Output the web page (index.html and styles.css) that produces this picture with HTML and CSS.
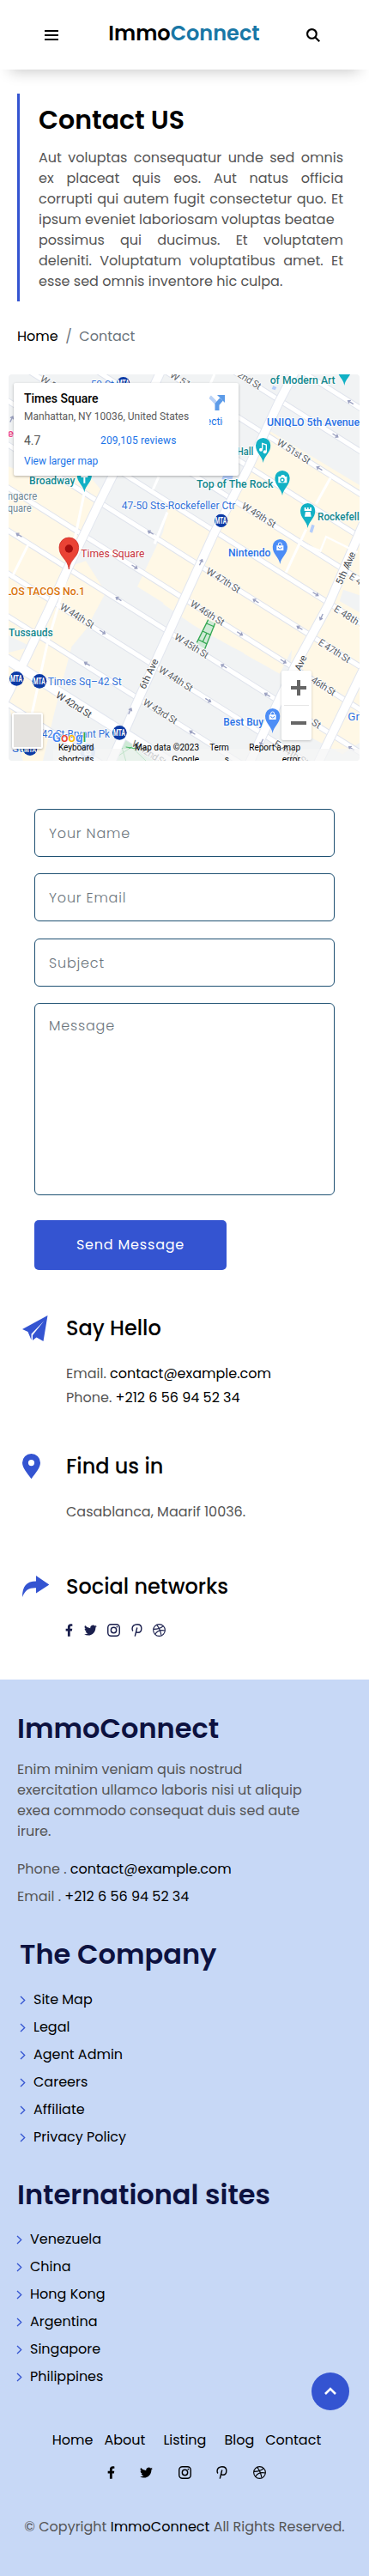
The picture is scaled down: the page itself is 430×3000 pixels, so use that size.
FILE: index.html
```html
<!DOCTYPE html>
<html lang="en">
<head>
<meta charset="utf-8">
<meta name="viewport" content="width=device-width, initial-scale=1">
<title>ImmoConnect - Contact</title>
<link rel="stylesheet" href="styles.css">
</head>
<body>
<svg class="sprite" aria-hidden="true">
  <symbol id="facebook" viewBox="0 0 320 512"><path d="M279 288l14-93h-89v-60c0-25 12-50 52-50h41V7s-37-7-72-7c-73 0-121 44-121 125v70H23v93h81v224h100V288z"/></symbol>
  <symbol id="twitter" viewBox="0 0 16 14"><path d="M5 13.5c6 0 9.300-5 9.300-9.300v-.4c.7-.5 1.200-1 1.700-1.700-.6.3-1.200.4-1.900.5.7-.4 1.200-1 1.400-1.800-.6.4-1.300.6-2.100.8A3.300 3.300 0 0 0 7.800 4.600 9.300 9.300 0 0 1 1.100 1.200a3.300 3.300 0 0 0 1 4.400c-.5 0-1-.1-1.500-.4 0 1.600 1.100 2.900 2.600 3.300-.5.1-1 .1-1.500 0 .4 1.300 1.700 2.300 3.100 2.300A6.600 6.600 0 0 1 0 12.100c1.500.9 3.200 1.400 5 1.400"/></symbol>
  <symbol id="instagram" viewBox="0 0 16 16"><rect x=".8" y=".8" width="14.400" height="14.400" rx="4" fill="none" stroke="currentColor" stroke-width="1.500"/><circle cx="8" cy="8" r="3.400" fill="none" stroke="currentColor" stroke-width="1.500"/><circle cx="12.200" cy="3.800" r="1"/></symbol>
  <symbol id="pinterest" viewBox="0 0 13 16"><path d="M1.600 9C.9 8.200.7 7.200.7 6.100.7 3 3.200.8 6.800.8c3.300 0 5.400 2 5.400 4.800 0 3.200-1.700 5.400-4.200 5.400-1.200 0-2-.6-2.300-1.500M6.800 4.800 4.100 15.600" fill="none" stroke="currentColor" stroke-width="1.500"/></symbol>
  <symbol id="dribbble" viewBox="0 0 16 16"><g fill="none" stroke="currentColor" stroke-width="1.200"><circle cx="8" cy="8" r="7.300"/><path d="M5 1.400c3 3.600 4.800 8 5.600 13M1 6.800c5 0 9-1 12-4M2.800 13c2.600-4.200 6.800-5.700 12.400-4.500"/></g></symbol>
  <symbol id="chevron" viewBox="0 0 7 11"><path d="M1 1l4.700 4.500L1 10" fill="none" stroke="#3454d1" stroke-width="1.300"/></symbol>
  <symbol id="shop" viewBox="0 0 54 90"><path d="M27 88C23 62 1 54 1 27a26 26 0 0 1 52 0c0 27-22 35-26 61z" fill="#4c8df6"/><path d="M15 23h24v17H15z" fill="#fff"/><path d="M21 23v-4a6 6 0 0 1 12 0v4" fill="none" stroke="#fff" stroke-width="3"/><path d="M21 28a6 6 0 0 0 12 0" fill="none" stroke="#4c8df6" stroke-width="3"/></symbol>
  <symbol id="place" viewBox="0 0 54 90"><path d="M27 88C23 62 1 54 1 27a26 26 0 0 1 52 0c0 27-22 35-26 61z" fill="#12b1c5"/></symbol>
</svg>

<header class="header">
  <svg class="menu" viewBox="0 0 16 12"><path d="M0 1h16M0 6h16M0 11h16"/></svg>
  <div class="logo">Immo<span class="logo-accent">Connect</span></div>
  <svg class="search" viewBox="0 0 15 15"><circle cx="6" cy="6" r="5"/><path d="M9.500 9.500l4.800 4.800"/></svg>
</header>

<section class="intro">
  <h1 class="intro-title">Contact US</h1>
  <p class="intro-text">
    <span class="line">Aut voluptas consequatur unde sed omnis</span>
    <span class="line">ex placeat quis eos. Aut natus officia</span>
    <span class="line">corrupti qui autem fugit consectetur quo. Et</span>
    <span class="line line-start">ipsum eveniet laboriosam voluptas beatae</span>
    <span class="line">possimus qui ducimus. Et voluptatem</span>
    <span class="line">deleniti. Voluptatum voluptatibus amet. Et</span>
    <span class="line line-start">esse sed omnis inventore hic culpa.</span>
  </p>
</section>

<nav class="breadcrumb"><a class="link">Home</a><span class="slash">/</span><span>Contact</span></nav>

<section class="map">
  <svg class="map-canvas" viewBox="30 48 1227 1350">
    <rect x="30" y="48" width="1227" height="1350" fill="#f1f3f4"/>
    <g fill="#fff8e6">
      <path d="M30 370L110 405 250 410 320 500 240 720 300 700 370 810 300 940 250 1000 190 1230 150 1398H80L30 1200z"/>
      <path d="M250 400h60l50 60-60 130-60-20z"/>
      <path d="M570 850l90-190 80-60 120-240 65-125 332 200v900l-60 40-150-80 10-260-60 70-320-180z"/>
      <path d="M590 500l270 160 397 190v250L900 1050 480 790 570 600z"/>
      <path d="M1110 960l147 90v190l-170-80z"/>
    </g>
    <path d="M600 890l150 80 100 50 30 50 40 10 40 50 60-120-10 150-80 120-330-200z" fill="#f1f3f4"/>
    <path d="M1200 800l57 20v60l-70-40zM30 960l80 40-80 20z" fill="#f1f3f4"/>
    <path d="M400 1335l80-20 90 83H400z" fill="#ceead6"/>
    <path d="M420 1330l20 68M400 1390l60-40 50 48M440 1350l70 10" stroke="#4bb868" stroke-width="3" fill="none"/>
    <g fill="#b4cdfb"><path d="M780 402h35l-5 20-35-8zM1090 572l10 4-8 26-10-4zM955 88l12 5-5 10-12-4z"/></g>
    <g class="road-edge">
      <path d="M0-627L1300 192M0-477L1300 342M0-327L1300 492M0-177L1300 642M0-27L1300 792M0 123L1300 942M0 276L1300 1095M0 426L1300 1245M0 576L1300 1395M0 726L1300 1545M0 876L1300 1695M0 1183L600 1561"/>
    </g>
    <g class="road">
      <path d="M0-627L1300 192M0-477L1300 342M0-327L1300 492M0-177L1300 642M0-27L1300 792M0 123L1300 942M0 276L1300 1095M0 426L1300 1245M0 576L1300 1395M0 726L1300 1545M0 876L1300 1695M0 1183L600 1561"/>
    </g>
    <g fill="none" stroke="#e2e6ef">
      <path d="M-10 1240L90 1040 180 850 240 720 345 500 400 390 570 20M385 1410L490 1170 645 830 750 600 870 370 975 145 1040 20M870 1410L1030 1070 1150 850 1270 570M1110 1410L1270 1080" stroke-width="34"/>
      <path d="M0 1028L600 1406" stroke-width="38"/>
    </g>
    <g fill="none" stroke="#fff">
      <path d="M-10 1240L90 1040 180 850 240 720 345 500 400 390 570 20M385 1410L490 1170 645 830 750 600 870 370 975 145 1040 20M870 1410L1030 1070 1150 850 1270 570M1110 1410L1270 1080" stroke-width="28"/>
      <path d="M0 1028L600 1406" stroke-width="32"/>
      <path d="M295 460L262 620 242 725 165 990 110 1240M585 530L540 640M100 640L40 760M1155 410L1105 500M1070 590L1000 740M555 405L535 450M750 48l-40 90" stroke-width="9"/>
      <path d="M1060 640l60 25 20-50 110 55" stroke-width="7"/>
    </g>
    <path d="M728 905l24 12-36 90-28-18z" fill="#ceead6"/>
    <path d="M728 905l-40 80M752 917l-36 90M722 918l28 12M708 945l30 14M694 975l28 14M723 952l-15 32" stroke="#34a853" stroke-width="4" fill="none"/>
    <g class="arrows">
      <path d="M-11 0H11M-3-6L-11 0-3 6" transform="translate(67 610) rotate(32)"/>
      <path d="M-11 0H11M-3-6L-11 0-3 6" transform="translate(527 601) rotate(32)"/>
      <path d="M-11 0H11M-3-6L-11 0-3 6" transform="translate(1117 377) rotate(32)"/>
      <path d="M-11 0H11M-3-6L-11 0-3 6" transform="translate(1226 146) rotate(32)"/>
      <path d="M-11 0H11M3-6L11 0 3 6" transform="translate(1172 261) rotate(32)"/>
      <path d="M-11 0H11M3-6L11 0 3 6" transform="translate(470 720) rotate(32)"/>
      <path d="M-11 0H11M-3-6L-11 0-3 6" transform="translate(415 833) rotate(32)"/>
      <path d="M-11 0H11M-3-6L-11 0-3 6" transform="translate(895 840) rotate(32)"/>
      <path d="M-11 0H11M3-6L11 0 3 6" transform="translate(1103 815) rotate(32)"/>
      <path d="M-11 0H11M-3-6L-11 0-3 6" transform="translate(1048 934) rotate(32)"/>
      <path d="M-11 0H11M3-6L11 0 3 6" transform="translate(838 953) rotate(32)"/>
      <path d="M-11 0H11M3-6L11 0 3 6" transform="translate(990 1050) rotate(32)"/>
      <path d="M-11 0H11M3-6L11 0 3 6" transform="translate(358 948) rotate(32)"/>
      <path d="M-11 0H11M-3-6L-11 0-3 6" transform="translate(305 1060) rotate(32)"/>
      <path d="M-11 0H11M-3-6L-11 0-3 6" transform="translate(783 1068) rotate(32)"/>
      <path d="M-11 0H11M-3-6L-11 0-3 6" transform="translate(935 1168) rotate(32)"/>
      <path d="M-11 0H11M3-6L11 0 3 6" transform="translate(727 1186) rotate(32)"/>
      <path d="M-11 0H11M-3-6L-11 0-3 6" transform="translate(673 1300) rotate(32)"/>
      <path d="M-11 0H11M-3-6L-11 0-3 6" transform="translate(1229 1355) rotate(32)"/>
      <path d="M-11 0H11M3-6L11 0 3 6" transform="translate(702 705) rotate(-65)"/>
      <path d="M-11 0H11M3-6L11 0 3 6" transform="translate(454 1225) rotate(-65)"/>
      <path d="M-11 0H11M-3-6L-11 0-3 6" transform="translate(1124 895) rotate(-65)"/>
      <path d="M-11 0H11M-3-6L-11 0-3 6" transform="translate(915 1332) rotate(-65)"/>
      <path d="M-11 0H11M3-6L11 0 3 6" transform="translate(40 205) rotate(-65)"/>
    </g>
    <g class="street">
      <text transform="translate(138 70) rotate(32)">W 5</text>
      <text transform="translate(592 56) rotate(32)">W 51</text>
      <text transform="translate(828 54) rotate(32)" textLength="90">2nd St</text>
      <text transform="translate(965 292) rotate(32)" textLength="132">W 51st St</text>
      <text transform="translate(842 514) rotate(32)" textLength="134">W 49th St</text>
      <text transform="translate(718 742) rotate(32)" textLength="134">W 47th St</text>
      <text transform="translate(662 856) rotate(32)" textLength="134">W 46th St</text>
      <text transform="translate(607 971) rotate(32)" textLength="134">W 45th St</text>
      <text transform="translate(207 866) rotate(32)" textLength="134">W 44th St</text>
      <text transform="translate(552 1086) rotate(32)" textLength="134">W 44th St</text>
      <text transform="translate(497 1200) rotate(32)" textLength="134">W 43rd St</text>
      <text class="street-major" transform="translate(193 1175) rotate(32)" textLength="140">W 42nd St</text>
      <text transform="translate(458 1345) rotate(32)" textLength="134">W 42nd St</text>
      <text transform="translate(1165 874) rotate(32)">E 48th St</text>
      <text transform="translate(1110 991) rotate(32)" textLength="125">E 47th St</text>
      <text transform="translate(1218 760) rotate(32)">E 4</text>
      <text transform="translate(1085 1122) rotate(32)" textLength="94">46th St</text>
      <text transform="translate(1087 1270) rotate(32)">St</text>
      <text transform="translate(955 1345) rotate(32)">E 44th St</text>
      <g class="street-major">
        <text transform="translate(507 1150) rotate(-65)" textLength="112">6th Ave</text>
        <text transform="translate(1194 785) rotate(-65)" textLength="114">5th Ave</text>
        <text transform="translate(1050 1086) rotate(-65)">Ave</text>
        <text transform="translate(1220 725) rotate(-65)">Ave</text>
      </g>
    </g>
    <g class="poi">
      <text class="teal" x="944" y="81" textLength="228" lengthAdjust="spacingAndGlyphs">of Modern Art</text>
      <text class="blue" x="933" y="229" textLength="324" lengthAdjust="spacingAndGlyphs">UNIQLO 5th Avenue</text>
      <text class="teal" x="828" y="330" textLength="58" lengthAdjust="spacingAndGlyphs">Hall</text>
      <text class="teal" x="102" y="432" textLength="160" lengthAdjust="spacingAndGlyphs">Broadway</text>
      <text class="teal" x="687" y="445" textLength="268" lengthAdjust="spacingAndGlyphs">Top of The Rock</text>
      <text class="area" x="26" y="486" textLength="104" lengthAdjust="spacingAndGlyphs">ngacre</text>
      <text class="area" x="26" y="528" textLength="84" lengthAdjust="spacingAndGlyphs">quare</text>
      <text class="transit" x="425" y="519" textLength="398" lengthAdjust="spacingAndGlyphs">47-50 Sts-Rockefeller Ctr</text>
      <text class="teal" x="1110" y="559" textLength="165" lengthAdjust="spacingAndGlyphs">Rockefelle</text>
      <text class="red" x="283" y="687" textLength="222" lengthAdjust="spacingAndGlyphs">Times Square</text>
      <text class="blue" x="798" y="685" textLength="148" lengthAdjust="spacingAndGlyphs">Nintendo</text>
      <text class="orange" x="20" y="820" textLength="277" lengthAdjust="spacingAndGlyphs">LOS TACOS No.1</text>
      <text class="teal" x="30" y="964" textLength="155" lengthAdjust="spacingAndGlyphs">Tussauds</text>
      <text class="transit" x="167" y="1135" textLength="258" lengthAdjust="spacingAndGlyphs">Times Sq–42 St</text>
      <text class="blue" x="781" y="1276" textLength="140" lengthAdjust="spacingAndGlyphs">Best Buy</text>
      <text class="transit" x="146" y="1317" textLength="238" lengthAdjust="spacingAndGlyphs">42 St-Bryant Pk</text>
      <text class="transit" x="1216" y="1258">Gra</text>
      <text class="transit" x="42" y="1368">St</text>
      <text class="transit" x="317" y="95" textLength="82" lengthAdjust="spacingAndGlyphs">50 St</text>
      <text class="pink" x="26" y="267">el</text>
    </g>
    <use href="#place" x="1177" y="-1" width="54" height="90"/>
    <use href="#place" x="893" y="269" width="54" height="90"/>
    <use href="#place" x="268" y="372" width="54" height="90"/>
    <use href="#place" x="960" y="383" width="54" height="90"/>
    <use href="#place" x="1049" y="497" width="54" height="90"/>
    <use href="#shop" x="952" y="623" width="54" height="90"/>
    <use href="#shop" x="926" y="1214" width="54" height="90"/>
    <g opacity=".35"><use href="#shop" x="280" y="1338" width="54" height="90"/></g>
    <g fill="#fff"><path d="M283 402h24v6h-9v20h-6v-20h-9zM973 405h8l4-6h8l4 6h6v22h-30zM1064 513h6v6h4v-6h5v6h4v-6h6v12h-25zM1068 528h17l3 17h-23z"/></g>
    <path d="M917 310v-21l14 5v24" fill="none" stroke="#fff" stroke-width="4"/>
    <g fill="#fff"><circle cx="912" cy="311" r="6"/><circle cx="926" cy="319" r="6"/></g>
    <circle cx="987" cy="417" r="6" fill="none" stroke="#12b1c5" stroke-width="4"/>
    <g class="mta">
      <circle cx="431" cy="80" r="23"/><text x="410" y="91" textLength="42" lengthAdjust="spacingAndGlyphs">MTA</text>
      <circle cx="773" cy="559" r="23"/><text x="752" y="571" textLength="40" lengthAdjust="spacingAndGlyphs">MTA</text>
      <circle cx="58" cy="1111" r="25"/><text x="36" y="1123" textLength="42" lengthAdjust="spacingAndGlyphs">MTA</text>
      <circle cx="138" cy="1120" r="25"/><text x="116" y="1132" textLength="42" lengthAdjust="spacingAndGlyphs">MTA</text>
      <circle cx="418" cy="1300" r="25"/><text x="396" y="1312" textLength="42" lengthAdjust="spacingAndGlyphs">MTA</text>
      <circle cx="105" cy="1355" r="25"/><text x="84" y="1367" textLength="42" lengthAdjust="spacingAndGlyphs">MTA</text>
    </g>
    <path d="M241 729C236 690 207 688 207 652a34 34 0 0 1 68 0c0 36-29 38-34 77z" fill="#ea4335" stroke="#c5221f" stroke-width="2"/>
    <circle cx="241" cy="657" r="14" fill="#a50e0e"/>
    <rect x="185" y="1356" width="1072" height="42" fill="#f5f5f5" opacity=".7"/>
    <text class="google" x="182" y="1332"><tspan fill="#4285f4">G</tspan><tspan fill="#ea4335">o</tspan><tspan fill="#fbbc04">o</tspan><tspan fill="#4285f4">g</tspan><tspan fill="#34a853">l</tspan></text>
    <g class="legal">
      <text x="204" y="1363" textLength="124">Keyboard</text><text x="204" y="1405" textLength="124">shortcuts</text>
      <text x="471" y="1363" textLength="225">Map data ©2023</text><text x="601" y="1405" textLength="95">Google</text>
      <text x="733" y="1363" textLength="67">Term</text><text x="785" y="1405">s</text>
      <text x="871" y="1363" textLength="179">Report a map</text><text x="986" y="1405" textLength="64">error</text>
    </g>
  </svg>
  <div class="place-card">
    <div class="place-info">
      <div class="place-name">Times Square</div>
      <div class="place-address">Manhattan, NY 10036, United States</div>
      <div class="place-rating"><span class="score">4.7</span><a class="place-link reviews">209,105 reviews</a></div>
      <a class="place-link larger">View larger map</a>
    </div>
    <div class="directions">
      <svg class="directions-icon" viewBox="0 0 18 18"><path d="M.5 2L9 10.500" stroke="#b9d2f7" stroke-width="4"/><path d="M9 18V11l5-6" fill="none" stroke="#5c9be8" stroke-width="5"/><path d="M9 0h9v9z" fill="#5c9be8"/></svg>
      <div class="directions-label"><span class="directions-text">Directions</span></div>
    </div>
  </div>
  <div class="layer-toggle"></div>
  <div class="zoom-control">
    <svg class="zoom-icon" viewBox="0 0 18 18"><path d="M9 0v18M0 9h18"/></svg>
    <svg class="zoom-icon" viewBox="0 0 18 18"><path d="M0 9h18"/></svg>
  </div>
</section>

<form class="form">
  <input class="field" type="text" placeholder="Your Name">
  <input class="field" type="text" placeholder="Your Email">
  <input class="field" type="text" placeholder="Subject">
  <textarea class="field message" placeholder="Message"></textarea>
  <button class="submit" type="button">Send Message</button>
</form>

<section class="contacts">
  <div class="contact hello">
    <svg class="contact-icon" viewBox="0 0 31 31"><path d="M0 16L29.500 0 24.500 30l-8-4.500L12 29v-6L25.500 6 10.500 21.500v7L6.500 19z"/></svg>
    <div><h3 class="contact-title">Say Hello</h3>
      <p class="contact-text">Email. <a class="link">contact@example.com</a></p>
      <p class="contact-text">Phone. <a class="link">+212 6 56 94 52 34</a></p></div>
  </div>
  <div class="contact find">
    <svg class="contact-icon" viewBox="0 0 31 31"><path fill-rule="evenodd" d="M10.500 29.300C5 22 0 16 0 10.500a10.500 10.500 0 0 1 21 0C21 16 16 22 10.500 29.300zM10.500 7a3.600 3.600 0 1 0 0 7.200 3.600 3.600 0 0 0 0-7.200z"/></svg>
    <div><h3 class="contact-title">Find us in</h3><p class="contact-text">Casablanca, Maarif 10036.</p></div>
  </div>
  <div class="contact social">
    <svg class="contact-icon" viewBox="0 0 31 31"><path d="M0 27C0 14 5 8.500 16 8.500V2l15.500 10.500L16 22.500v-6.200C8 16 3.500 18.500 0 27z"/></svg>
    <div><h3 class="contact-title">Social networks</h3>
      <div class="icons icons-contact">
        <svg class="icon fb"><use href="#facebook"/></svg><svg class="icon tw"><use href="#twitter"/></svg><svg class="icon"><use href="#instagram"/></svg><svg class="icon pin"><use href="#pinterest"/></svg><svg class="icon"><use href="#dribbble"/></svg>
      </div></div>
  </div>
</section>

<footer class="footer">
  <h2 class="footer-title">ImmoConnect</h2>
  <p class="about">Enim minim veniam quis nostrud<br>exercitation ullamco laboris nisi ut aliquip<br>exea commodo consequat duis sed aute<br>irure.</p>
  <div class="footer-contact">
    <div>Phone . <a class="link">contact@example.com</a></div>
    <div>Email . <a class="link">+212 6 56 94 52 34</a></div>
  </div>
  <section class="company">
    <h2 class="footer-title">The Company</h2>
    <ul class="links">
      <li class="item"><svg class="chev"><use href="#chevron"/></svg>Site Map</li>
      <li class="item"><svg class="chev"><use href="#chevron"/></svg>Legal</li>
      <li class="item"><svg class="chev"><use href="#chevron"/></svg>Agent Admin</li>
      <li class="item"><svg class="chev"><use href="#chevron"/></svg>Careers</li>
      <li class="item"><svg class="chev"><use href="#chevron"/></svg>Affiliate</li>
      <li class="item"><svg class="chev"><use href="#chevron"/></svg>Privacy Policy</li>
    </ul>
  </section>
  <section class="sites">
    <h2 class="footer-title">International sites</h2>
    <ul class="links">
      <li class="item"><svg class="chev"><use href="#chevron"/></svg>Venezuela</li>
      <li class="item"><svg class="chev"><use href="#chevron"/></svg>China</li>
      <li class="item"><svg class="chev"><use href="#chevron"/></svg>Hong Kong</li>
      <li class="item"><svg class="chev"><use href="#chevron"/></svg>Argentina</li>
      <li class="item"><svg class="chev"><use href="#chevron"/></svg>Singapore</li>
      <li class="item"><svg class="chev"><use href="#chevron"/></svg>Philippines</li>
    </ul>
  </section>
  <nav class="footer-nav"><a>Home</a><a>About</a><a class="wide">Listing</a><a>Blog</a><a>Contact</a></nav>
  <div class="icons icons-footer">
    <svg class="icon fb"><use href="#facebook"/></svg><svg class="icon tw"><use href="#twitter"/></svg><svg class="icon"><use href="#instagram"/></svg><svg class="icon pin"><use href="#pinterest"/></svg><svg class="icon"><use href="#dribbble"/></svg>
  </div>
  <p class="copyright">© Copyright <a class="link">ImmoConnect</a> All Rights Reserved.</p>
  <a class="to-top"><svg class="to-top-icon" viewBox="0 0 14 9"><path d="M1 8l6-6 6 6"/></svg></a>
</footer>
</body>
</html>
```

FILE: styles.css
```css
* { box-sizing: border-box; }
body { margin: 0; background: #fff; color: #555; font: 16px/24px Poppins, Inter, sans-serif; }
h1, h2, h3, p, ul { margin: 0; padding: 0; }
ul { list-style: none; }
svg { display: block; }
.sprite { position: absolute; width: 0; height: 0; }
.link { color: #000; }

.header { display: flex; align-items: flex-start; height: 81px; padding: 0 57px 0 52px; justify-content: space-between; box-shadow: 0 14px 16px -12px rgba(0,0,0,.22); }
.menu { width: 16px; height: 12px; margin-top: 35px; stroke: #000; stroke-width: 2; }
.logo { margin: 23px 0 0 4px; font-size: 24px; line-height: 31px; font-weight: 600; color: #000; }
.logo-accent { color: #1977a6; }
.search { width: 16px; height: 16px; margin-top: 33px; fill: none; stroke: #000; stroke-width: 2; }

.intro { height: 242px; margin: 28px 30px 0 20px; padding: 13px 0 0 22px; border-left: 3px solid #3454d1; }
.intro-title { margin-bottom: 13.500px; font-size: 30px; line-height: 36px; font-weight: 600; color: #000; }
.line { display: block; white-space: nowrap; text-align: justify; text-align-last: justify; }
.line-start { text-align-last: left; }

.breadcrumb { display: flex; margin: 29px 20px 0; color: #6c757d; }
.slash { margin: 0 8.500px; }

.map { position: relative; width: 409px; height: 450px; margin: 32px 0 0 10px; overflow: hidden; border-radius: 4px; font-family: Roboto, sans-serif; }
.map-canvas { width: 409px; height: 450px; }
.road-edge { stroke: #dfe3ec; stroke-width: 21; }
.road { stroke: #fff; stroke-width: 15; }
.arrows { fill: none; stroke: #9aa0c0; stroke-width: 4; }
.street { font-size: 34px; font-weight: 400; fill: #62676c; stroke: #fff; stroke-width: 5px; paint-order: stroke; }
.street-major { fill: #44484d; }
.poi { font-size: 40px; font-weight: 500; stroke: #fff; stroke-width: 5px; paint-order: stroke; }
.teal { fill: #12878d; }
.blue { fill: #2a72e5; }
.transit { fill: #3271d8; font-weight: 400; }
.area { fill: #6e8590; font-weight: 400; }
.red { fill: #c5303a; font-weight: 400; }
.orange { fill: #da7308; }
.pink { fill: #ec4585; }
.mta { fill: #0b3aa5; font-size: 34px; font-weight: 700; }
.mta text { fill: #fff; }
.google { font-size: 45px; font-weight: 500; stroke: #fff; stroke-width: 3px; paint-order: stroke; }
.legal { font-size: 30px; fill: #000; }
.place-card { position: absolute; left: 6px; top: 10px; display: flex; width: 262px; height: 108px; padding: 9px 16px 0 12px; border-radius: 2px; background: #fff; box-shadow: 0 1px 3px rgba(0,0,0,.3); }
.place-info { flex: 1; }
.place-name { font-size: 14px; line-height: 19px; font-weight: 500; color: #000; }
.place-address { font-size: 12px; line-height: 18px; margin-top: 2px; white-space: nowrap; color: #5b5b5b; }
.place-rating { display: flex; align-items: center; height: 18px; margin-top: 10px; }
.score { width: 89px; font-size: 14px; }
.place-link { font-size: 12px; color: #1a73e8; }
.reviews { letter-spacing: .15px; }
.larger { display: block; margin-top: 3px; line-height: 24px; }
.directions { width: 18px; padding-top: 5px; }
.directions-icon { width: 18px; height: 18px; }
.directions-label { display: flex; justify-content: center; width: 16px; margin-top: 4px; overflow: hidden; font-size: 12px; line-height: 18px; color: #1a73e8; }
.directions-text { flex: none; }
.layer-toggle { position: absolute; left: 4px; top: 394px; width: 36px; height: 42px; border: 2px solid #fff; border-radius: 2px; background: #e4e2df; box-shadow: 0 1px 3px rgba(0,0,0,.3); }
.zoom-control { position: absolute; left: 318px; top: 345px; display: grid; grid-template-rows: 1fr 1fr; width: 35px; height: 81px; border-radius: 2px; background: linear-gradient(#e6e6e6, #e6e6e6) center / 29px 1px no-repeat #fff; box-shadow: 0 1px 3px rgba(0,0,0,.2); place-items: center; padding-left: 5px; }
.zoom-icon { width: 18px; height: 18px; stroke: #666; stroke-width: 4; }

.form { display: grid; grid-template-rows: 56px 56px 56px 224px 58px; row-gap: 19.300px; height: 537px; margin: 56px 40px 0; }
.field { width: 100%; height: 100%; margin: 0; padding: 1px 16px 0; border: 1px solid #1f5173; border-radius: 6px; background: #fff; font: 300 16px/24px Poppins, Inter, sans-serif; letter-spacing: .8px; resize: none; outline: 0; }
.message { padding-top: 14px; }
.field::placeholder { color: #6c757d; opacity: 1; }
.submit { width: 224px; height: 58px; margin-top: 10px; border: 0; border-radius: 5px; background: #3454d1; color: #fff; font: 400 16px/24px Poppins, Inter, sans-serif; letter-spacing: .8px; }

.contacts { padding: 53px 26px 0; height: 477px; }
.contact { display: grid; grid-template-columns: 51px 1fr; }
.hello { height: 161px; }
.find { height: 140px; }
.contact-icon { width: 31px; height: 31px; fill: #3454d1; }
.contact-title { margin-bottom: 24px; font-size: 24px; line-height: 30px; font-weight: 500; color: #000; }
.contact-text { line-height: 28px; }
.social .contact-title { margin-bottom: 28px; }

.icons { display: flex; align-items: center; height: 15px; }
.icon { width: 15px; height: 15px; fill: currentColor; }
.fb { width: 9px; }
.tw { height: 13px; }
.pin { width: 13px; }
.icons-contact { gap: 12.500px; color: #1a1f4d; margin-left: -1px; }
.icons-footer { justify-content: center; gap: 29.500px; margin-top: 18.800px; padding-left: 4px; color: #000; }

.footer { position: relative; height: 1044px; padding: 36.500px 20px 0; background: #c7d8f6; }
.footer-title { font-size: 32px; line-height: 40px; font-weight: 600; color: #0d1240; }
.about { margin-top: 16.500px; }
.footer-contact { margin-top: 16px; line-height: 32px; }
.company { padding: 31px 3px 0; }
.item { display: flex; align-items: center; gap: 9px; height: 32px; color: #000; }
.chev { width: 7px; height: 11px; }
.company .links { margin-top: 17px; }
.sites { margin: 31px 0 0 -1px; }
.sites .footer-title { padding-left: 1px; }
.sites .links { margin-top: 16px; }
.footer-nav { display: flex; justify-content: center; gap: 13px; margin-top: 45.500px; padding-left: 5px; color: #000; }
.wide { margin: 0 8px; }
.copyright { margin-top: 44px; text-align: center; white-space: nowrap; }
.to-top { position: absolute; right: 23px; bottom: 193px; display: grid; width: 44px; height: 44px; border-radius: 50%; background: #3454d1; place-items: center; }
.to-top-icon { width: 14px; height: 9px; margin: 0 1px 2px 0; fill: none; stroke: #fff; stroke-width: 2.600; }
```
